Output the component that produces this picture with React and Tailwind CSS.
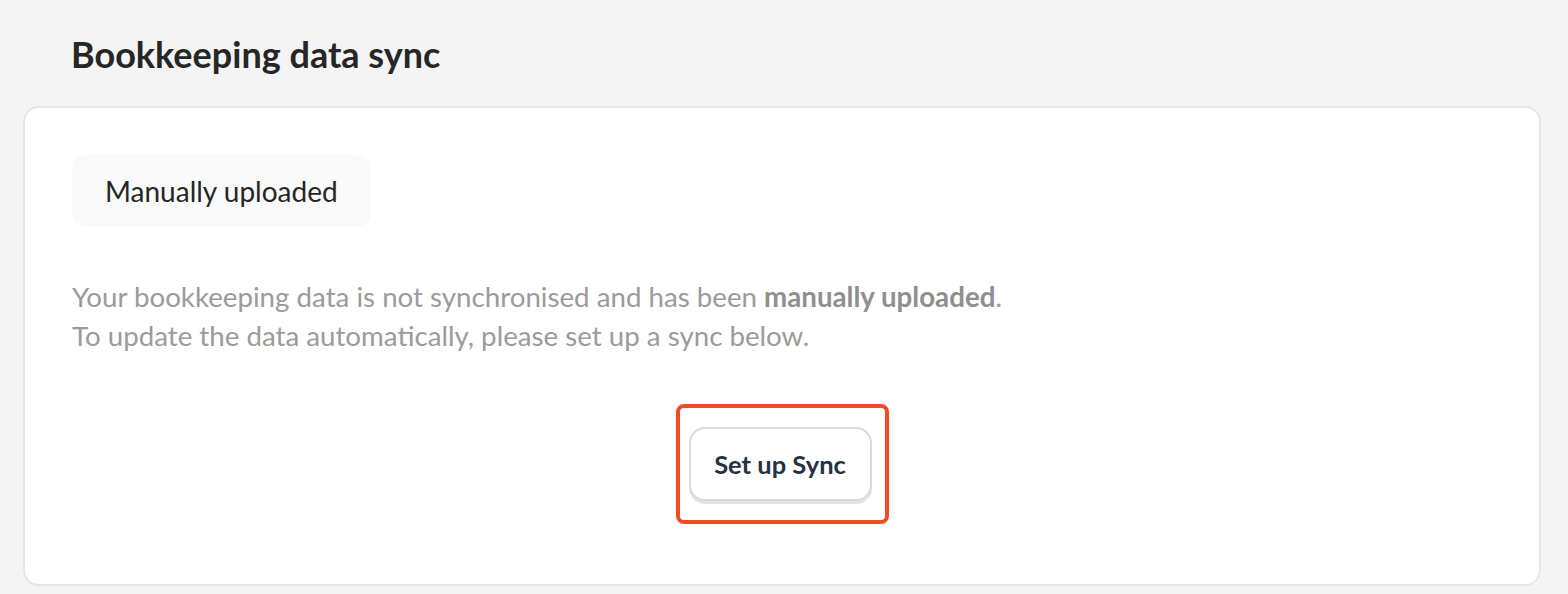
import React from 'react';

export default function App() {
  return (
    <div className="min-h-[594px] w-full bg-[#f4f4f4] pt-[32px] pb-[9px] font-['Lato','Liberation_Sans',sans-serif]">
      <h2 className="pl-[71px] text-[36px] font-bold leading-[44px] text-[#262626]">
        Bookkeeping data sync
      </h2>
      <div className="mt-[30px] ml-[23px] w-[1518px] rounded-[16px] border-2 border-[#e6e6e6] bg-white px-[47px] pt-[47px] pb-[60px]">
        <div className="inline-flex h-[72px] items-center rounded-[14px] bg-[#fafafa] px-[33px] text-[28px] text-[#262626]">
          Manually uploaded
        </div>
        <p className="mt-[50px] text-[27.7px] leading-[39px] text-[#9b9b9b]">
          Your bookkeeping data is not synchronised and has been{' '}
          <span className="font-bold text-[#8f8f8f]">manually uploaded</span>.
          <br />
          To update the data automatically, please set up a sync below.
        </p>
        <div className="mt-[49px] flex justify-center">
          <div className="rounded-[8px] border-4 border-[#f24a26] pl-[9px] pr-[13px] py-[19px]">
            <button className="h-[74px] w-[183px] rounded-[16px] border-2 border-[#d9d9d9] bg-white text-[25.5px] font-bold text-[#253142] shadow-[0_3px_0_#e2e2e2]">
              Set up Sync
            </button>
          </div>
        </div>
      </div>
    </div>
  );
}
